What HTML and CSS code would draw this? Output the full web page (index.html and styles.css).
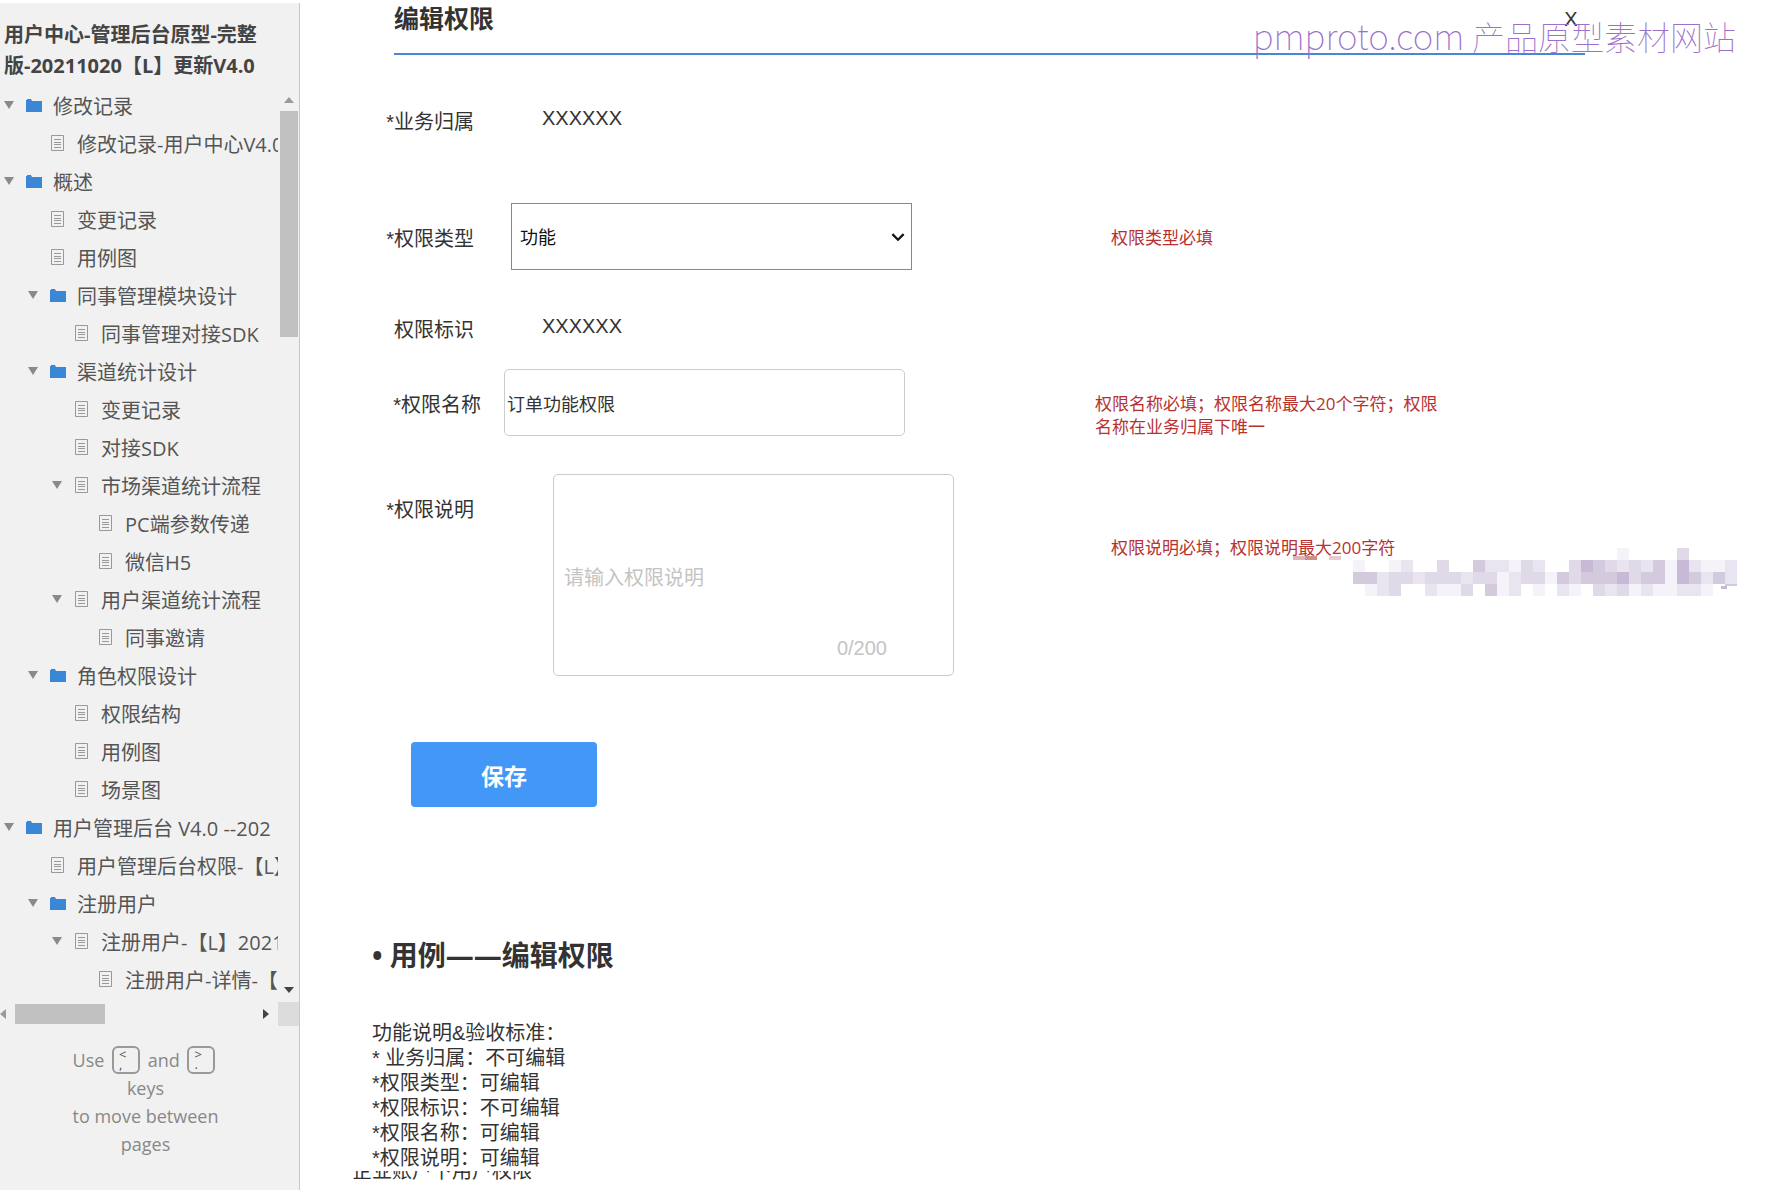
FILE: index.html
```html
<!DOCTYPE html>
<html lang="zh-CN">
<head>
<meta charset="UTF-8">
<meta name="viewport" content="width=device-width, initial-scale=1.0">
<title>编辑权限</title>
<link rel="stylesheet" href="styles.css">
</head>
<body>
<svg class="sprite" aria-hidden="true">
    <symbol id="folder" viewBox="0 0 16 18">
        <path d="M0 4h1v-1h4l1 2h10v11H0z" fill="#3a87d6"/>
    </symbol>
    <symbol id="page" viewBox="0 0 16 18">
        <path d="M1.500 1.500h12v15h-12z" fill="none" stroke="#999" stroke-width="1"/>
        <path d="M4 5.500h7M4 8.500h7M4 10.500h7M4 13.500h7" fill="none" stroke="#999" stroke-width="1"/>
    </symbol>
</svg>

<aside class="sidebar">
    <h1 class="project-title">用户中心-管理后台原型-完整版-20211020【L】更新V4.0</h1>

    <nav class="tree-panel">
        <ul class="tree">
            <li>
                <div class="node"><button class="toggle" aria-label="修改记录"></button><a href="#"><svg><use href="#folder"/></svg>修改记录</a></div>
                <ul>
                    <li><div class="node leaf"><a href="#"><svg><use href="#page"/></svg>修改记录-用户中心V4.0</a></div></li>
                </ul>
            </li>
            <li>
                <div class="node"><button class="toggle" aria-label="概述"></button><a href="#"><svg><use href="#folder"/></svg>概述</a></div>
                <ul>
                    <li><div class="node leaf"><a href="#"><svg><use href="#page"/></svg>变更记录</a></div></li>
                    <li><div class="node leaf"><a href="#"><svg><use href="#page"/></svg>用例图</a></div></li>
                    <li>
                        <div class="node"><button class="toggle" aria-label="同事管理模块设计"></button><a href="#"><svg><use href="#folder"/></svg>同事管理模块设计</a></div>
                        <ul>
                            <li><div class="node leaf"><a href="#"><svg><use href="#page"/></svg>同事管理对接SDK</a></div></li>
                        </ul>
                    </li>
                    <li>
                        <div class="node"><button class="toggle" aria-label="渠道统计设计"></button><a href="#"><svg><use href="#folder"/></svg>渠道统计设计</a></div>
                        <ul>
                            <li><div class="node leaf"><a href="#"><svg><use href="#page"/></svg>变更记录</a></div></li>
                            <li><div class="node leaf"><a href="#"><svg><use href="#page"/></svg>对接SDK</a></div></li>
                            <li>
                                <div class="node"><button class="toggle" aria-label="市场渠道统计流程"></button><a href="#"><svg><use href="#page"/></svg>市场渠道统计流程</a></div>
                                <ul>
                                    <li><div class="node leaf"><a href="#"><svg><use href="#page"/></svg>PC端参数传递</a></div></li>
                                    <li><div class="node leaf"><a href="#"><svg><use href="#page"/></svg>微信H5</a></div></li>
                                </ul>
                            </li>
                            <li>
                                <div class="node"><button class="toggle" aria-label="用户渠道统计流程"></button><a href="#"><svg><use href="#page"/></svg>用户渠道统计流程</a></div>
                                <ul>
                                    <li><div class="node leaf"><a href="#"><svg><use href="#page"/></svg>同事邀请</a></div></li>
                                </ul>
                            </li>
                        </ul>
                    </li>
                    <li>
                        <div class="node"><button class="toggle" aria-label="角色权限设计"></button><a href="#"><svg><use href="#folder"/></svg>角色权限设计</a></div>
                        <ul>
                            <li><div class="node leaf"><a href="#"><svg><use href="#page"/></svg>权限结构</a></div></li>
                            <li><div class="node leaf"><a href="#"><svg><use href="#page"/></svg>用例图</a></div></li>
                            <li><div class="node leaf"><a href="#"><svg><use href="#page"/></svg>场景图</a></div></li>
                        </ul>
                    </li>
                </ul>
            </li>
            <li>
                <div class="node"><button class="toggle" aria-label="用户管理后台"></button><a href="#"><svg><use href="#folder"/></svg>用户管理后台 V4.0 --202</a></div>
                <ul>
                    <li><div class="node leaf"><a href="#"><svg><use href="#page"/></svg>用户管理后台权限-【L】</a></div></li>
                    <li>
                        <div class="node"><button class="toggle" aria-label="注册用户"></button><a href="#"><svg><use href="#folder"/></svg>注册用户</a></div>
                        <ul>
                            <li>
                                <div class="node"><button class="toggle" aria-label="注册用户【L】"></button><a href="#"><svg><use href="#page"/></svg>注册用户-【L】2021</a></div>
                                <ul>
                                    <li><div class="node leaf"><a href="#"><svg><use href="#page"/></svg>注册用户-详情-【L】</a></div></li>
                                </ul>
                            </li>
                        </ul>
                    </li>
                </ul>
            </li>
        </ul>
        <div class="scroll-y">
            <span class="arrow up"></span>
            <span class="thumb"></span>
            <span class="arrow down"></span>
        </div>
        <div class="scroll-x">
            <span class="arrow left"></span>
            <span class="thumb"></span>
            <span class="arrow right"></span>
        </div>
        <div class="scroll-corner"></div>
    </nav>

    <div class="key-help">
        Use <kbd>&lt;<br>,</kbd> and <kbd>&gt;<br>.</kbd><br>
        keys<br>
        to move between<br>
        pages
    </div>
</aside>

<main class="content">
    <div class="watermark"><span class="site">pmproto.com </span>产品原型素材网站</div>

    <header class="dialog-header">
        <h2>编辑权限</h2>
        <button class="close" aria-label="关闭">X</button>
    </header>

    <form class="form">
        <div class="row row-text row-first">
            <span class="label">*业务归属</span>
            <span class="value">XXXXXX</span>
        </div>

        <div class="row row-type">
            <label class="label" for="type">*权限类型</label>
            <div class="select-wrap">
                <select id="type" class="field">
                    <option>功能</option>
                </select>
                <svg class="chevron" viewBox="0 0 12 8"><path d="M1 1l5 5 5-5" fill="none" stroke="#111" stroke-width="2"/></svg>
            </div>
            <p class="hint">权限类型必填</p>
        </div>

        <div class="row row-text row-id">
            <span class="label">权限标识</span>
            <span class="value">XXXXXX</span>
        </div>

        <div class="row row-name">
            <label class="label" for="name">*权限名称</label>
            <input id="name" class="field" type="text" value="订单功能权限">
            <p class="hint">权限名称必填；权限名称最大20个字符；权限名称在业务归属下唯一</p>
        </div>

        <div class="row row-desc">
            <label class="label" for="desc">*权限说明</label>
            <div class="textarea-wrap">
                <textarea id="desc" class="field" placeholder="请输入权限说明"></textarea>
                <span class="counter">0/200</span>
            </div>
            <p class="hint">权限说明必填；权限说明最大200字符</p>
            <svg class="mosaic" viewBox="0 0 37 4" preserveAspectRatio="none" shape-rendering="crispEdges" aria-hidden="true"></svg>
        </div>

        <button class="save" type="button">保存</button>
    </form>

    <section class="notes">
        <h2>• 用例——编辑权限</h2>
        <p>
            功能说明&amp;验收标准：<br>
            * 业务归属：不可编辑<br>
            *权限类型：可编辑<br>
            *权限标识：不可编辑<br>
            *权限名称：可编辑<br>
            *权限说明：可编辑
        </p>
        <div class="cut-line">企业账户下用户权限</div>
    </section>
</main>

<script src="script.js"></script>
</body>
</html>
```

FILE: styles.css
```css
:root {
    --text-color: #333;
    --side-bg-color: #f1f1f1;
    --thumb-color: #c1c1c1;
    --line-color: #4a86d8;
    --button-bg-color: #4397f7;
    --hint-color: #b8312f;
}
* {
    box-sizing: border-box;
}
body {
    margin: 0;
    display: flex;
    min-height: 100vh;
    font-family: "Open Sans", "Noto Sans CJK SC", sans-serif;
    font-size: 20px;
    color: var(--text-color);
    background: #fff;
    overflow-x: hidden;
}
h1, h2, p, ul {
    margin: 0;
    padding: 0;
}
button, input, select, textarea {
    font-family: inherit;
    color: inherit;
}
.sprite {
    position: absolute;
    width: 0;
    height: 0;
}

/* sidebar */
.sidebar {
    flex: 0 0 300px;
    margin-top: 3px;
    padding-top: 16px;
    background: var(--side-bg-color);
    border-right: 1px solid #c8c8c8;
}
.project-title {
    padding: 0 30px 0 4px;
    margin-bottom: 5px;
    font-size: 20px;
    line-height: 31px;
    color: #444;
}
.tree-panel {
    display: grid;
    grid-template-columns: 278px 1fr;
    grid-template-rows: auto 24px;
}
.tree {
    overflow: hidden;
    padding-bottom: 4px;
}
.tree ul {
    padding-left: 24px;
}
.tree li {
    list-style: none;
}
.node {
    display: flex;
    align-items: center;
    height: 38px;
    padding-left: 4px;
    gap: 12px;
}
.node.leaf {
    padding-left: 26px;
}
.node a {
    display: flex;
    align-items: center;
    gap: 11px;
    color: #555;
    text-decoration: none;
    white-space: nowrap;
}
.node svg {
    width: 16px;
    height: 18px;
}
.toggle {
    flex: none;
    width: 10px;
    height: 8px;
    padding: 0;
    border: 0;
    background: #8a8a8a;
    clip-path: polygon(0 0, 100% 0, 50% 100%);
    cursor: pointer;
}
.scroll-y {
    display: flex;
    flex-direction: column;
    align-items: center;
    padding: 11px 1px 9px 2px;
}
.scroll-y .thumb {
    width: 100%;
    height: 226px;
    margin-top: 8px;
    background: var(--thumb-color);
}
.scroll-x {
    display: flex;
    align-items: center;
    padding-right: 9px;
}
.scroll-x .thumb {
    width: 90px;
    height: 20px;
    margin-left: 9px;
    background: var(--thumb-color);
}
.arrow {
    background: #9a9a9a;
}
.up, .down {
    width: 10px;
    height: 6px;
}
.up {
    clip-path: polygon(50% 0, 100% 100%, 0 100%);
}
.down {
    margin-top: auto;
    background: #444;
    clip-path: polygon(0 0, 100% 0, 50% 100%);
}
.left, .right {
    width: 6px;
    height: 10px;
}
.left {
    clip-path: polygon(100% 0, 100% 100%, 0 50%);
}
.right {
    margin-left: auto;
    background: #444;
    clip-path: polygon(0 0, 100% 50%, 0 100%);
}
.scroll-corner {
    background: #dcdcdc;
}
.key-help {
    margin-top: 20px;
    padding-right: 8px;
    text-align: center;
    font-size: 18px;
    line-height: 28px;
    color: #888;
}
.key-help kbd {
    display: inline-block;
    width: 28px;
    height: 28px;
    margin: 0 3px;
    padding: 1px 0 0 5px;
    border: 2px solid #999;
    border-radius: 6px;
    font-family: inherit;
    font-size: 13px;
    line-height: 10px;
    text-align: left;
    vertical-align: -2px;
    color: #555;
}

/* edit dialog */
.content {
    position: relative;
    flex: 1;
    min-width: 0;
    padding-left: 72px;
}
.watermark {
    position: absolute;
    top: 12px;
    right: 40px;
    font-family: "Noto Sans CJK SC", sans-serif;
    font-weight: 100;
    font-size: 33px;
    line-height: 46px;
    color: #9a70c8;
    pointer-events: none;
}
.watermark .site {
    font-size: 35px;
}
.dialog-header {
    display: flex;
    justify-content: space-between;
    align-items: flex-start;
    width: 1191px;
    max-width: 100%;
    height: 55px;
    margin-left: 22px;
    border-bottom: 2px solid var(--line-color);
}
.dialog-header h2 {
    font-size: 25px;
    line-height: 36px;
}
.close {
    width: 28px;
    padding: 0;
    border: 0;
    background: none;
    font-family: "Liberation Sans", sans-serif;
    font-size: 20px;
    line-height: 38px;
    cursor: pointer;
}
.row {
    display: flex;
    align-items: center;
}
.label {
    flex: none;
    width: 102px;
    padding-top: 4px;
    font-family: "Liberation Sans", "Noto Sans CJK SC", sans-serif;
    line-height: 26px;
    text-align: right;
}
.value {
    margin-left: 68px;
    padding-bottom: 4px;
    font-family: "Liberation Sans", sans-serif;
    line-height: 34px;
}
.hint {
    padding-top: 2px;
    font-size: 17px;
    line-height: 23px;
    color: var(--hint-color);
}
.field {
    display: block;
    width: 401px;
    height: 67px;
    margin: 0;
    padding: 0 2px;
    border: 1px solid #ccc;
    border-radius: 5px;
    background: #fff;
    font-size: 18px;
}
.row-text {
    height: 40px;
}
.row-first {
    margin-top: 45px;
}
.row-type {
    margin-top: 63px;
}
.select-wrap {
    position: relative;
    margin: 0 199px 0 37px;
}
.select-wrap .field {
    appearance: none;
    padding: 0 8px;
    border-color: #888;
    border-radius: 0;
    color: #111;
}
.chevron {
    position: absolute;
    right: 7px;
    top: 30px;
    width: 14px;
    height: 9px;
    pointer-events: none;
}
.row-id {
    margin-top: 38px;
}
.row-name {
    height: 67px;
    margin-top: 21px;
}
.row-name .label {
    width: 109px;
}
.row-name .field {
    margin: 0 190px 0 23px;
}
.row-name .hint {
    width: 345px;
    padding-top: 25px;
}
.row-desc {
    position: relative;
    align-items: flex-start;
    margin-top: 38px;
}
.row-desc .label {
    padding-top: 23px;
}
.row-desc .hint {
    padding-top: 62px;
}
.textarea-wrap {
    position: relative;
    margin: 0 157px 0 79px;
}
.textarea-wrap .field {
    height: 202px;
    padding: 90px 10px 0;
    resize: none;
    font-size: 20px;
    line-height: 26px;
}
.field::placeholder {
    color: #c4c4c4;
}
.counter {
    position: absolute;
    right: 67px;
    bottom: 15px;
    font-family: "Liberation Sans", sans-serif;
    line-height: 26px;
    color: #c4c4c4;
}
/* pixelated strip beside the last hint */
.mosaic {
    position: absolute;
    left: 921px;
    top: 74px;
    width: 444px;
    height: 48px;
}
.save {
    display: block;
    width: 186px;
    height: 65px;
    margin: 66px 0 0 39px;
    padding: 0;
    border: 0;
    border-radius: 4px;
    background: var(--button-bg-color);
    color: #fff;
    font-size: 23px;
    font-weight: bold;
    cursor: pointer;
}

/* notes under the form */
.notes h2 {
    margin-top: 128px;
    font-size: 28px;
    line-height: 40px;
}
.notes p {
    margin-top: 46px;
    font-family: "Liberation Sans", "Noto Sans CJK SC", sans-serif;
    line-height: 25px;
}
.cut-line {
    display: flex;
    align-items: flex-end;
    height: 10px;
    margin-left: -20px;
    overflow: hidden;
    line-height: 20px;
}
```

FILE: script.js
```js
// each string is one line of 12px cells, 0 = empty, 1-5 = light to dark
const rows = [
    '0000000000000000000000000001000030000',
    '0000010012003004221320035432324152112',
    '0000044233233323312331434445344154242',
    '0000001230021130412010210323121122100'
];
const shades = ['', '#f5f3f9', '#e9e5f0', '#dfd9e8', '#d4cade', '#c8bad6'];

function drawMosaic() {
    const mosaic = document.querySelector('.mosaic');
    let cells = '<rect x="0" y="0.700" width="2" height="0.300" fill="#dfb4b5"/>' +
        '<rect x="1" y="0.700" width="1" height="0.300" fill="#cb8f8c"/>' +
        '<rect x="3" y="0.700" width="1" height="0.300" fill="#e6cccc"/>' +
        '<rect x="36" y="3" width="1" height="0.200" fill="#d4cade"/>' +
        '<rect x="35.700" y="3.200" width="0.500" height="0.200" fill="#c8bad6"/>';
    rows.forEach((row, y) => {
        [...row].forEach((level, x) => {
            if (level !== '0') {
                cells += `<rect x="${x}" y="${y}" width="1" height="1" fill="${shades[level]}"/>`;
            }
        });
    });
    mosaic.innerHTML = cells;
}

drawMosaic();
```
